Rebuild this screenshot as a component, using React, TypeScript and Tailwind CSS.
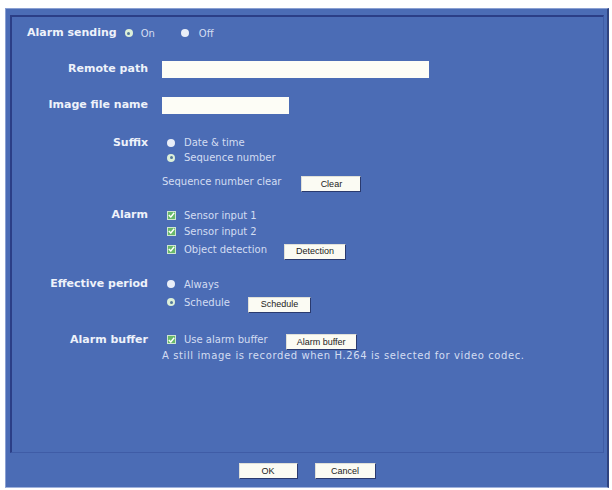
const label = 'w-[136px] shrink-0 text-right font-bold text-[11px] text-[#eef2fa]';
const val = 'text-[10px] text-[#d3ddf2]';

function Radio({ on }: { on?: boolean }) {
  return on ? (
    <span className="w-[8px] h-[8px] rounded-full bg-[#dcefd8] flex items-center justify-center shrink-0">
      <span className="w-[3px] h-[3px] rounded-full bg-[#54789a]" />
    </span>
  ) : (
    <span className="block w-[8px] h-[8px] rounded-full bg-[#e9eef8] shrink-0" />
  );
}

function Check() {
  return (
    <span className="w-[9px] h-[9px] bg-[#68b86a] border border-[#cfe6cf] flex items-center justify-center shrink-0">
      <svg width="7" height="6" viewBox="0 0 7 6">
        <path d="M0.8 3 L2.8 5 L6.2 0.8" stroke="#fff" strokeWidth="1.4" fill="none" />
      </svg>
    </span>
  );
}

function Btn({ children, w }: { children: string; w: string }) {
  return (
    <button
      className={`${w} h-[16px] bg-[#fbfbf3] border-t border-l border-[#e0e0d8] border-r border-b border-r-[#2a3a6e] border-b-[#2a3a6e] text-[9px] leading-none text-[#222] font-['Liberation_Sans',Arial,sans-serif] shrink-0`}
    >
      {children}
    </button>
  );
}

export default function App() {
  return (
    <div className="w-[612px] h-[490px] bg-white pt-[8px] pl-[5px] font-['DejaVu_Sans',Verdana,sans-serif]">
      <div className="w-[604px] h-[480px] bg-[#4b6cb5] border-t border-l border-[#8aa0d2] border-r-2 border-b border-r-[#2f437f] border-b-[#9fb2dc] pt-[6px] pl-[4px] pr-[3px] flex flex-col">
        <div className="h-[438px] border-t-2 border-l-2 border-[#2b3e86] border-r border-b border-r-[#3f5ca6] border-b-[#3f5ca6] flex flex-col pt-[8px]">
          {/* Alarm sending */}
          <div className="h-[16px] flex items-center pl-[15px]">
            <span className="font-bold text-[11px] text-[#eef2fa]">Alarm sending</span>
            <span className="ml-[8px]"><Radio on /></span>
            <span className={`${val} ml-[8px]`}>On</span>
            <span className="ml-[26px]"><Radio /></span>
            <span className={`${val} ml-[10px]`}>Off</span>
          </div>

          {/* Remote path */}
          <div className="h-[17px] mt-[20px] flex items-center">
            <span className={label}>Remote path</span>
            <div className="ml-[14px] w-[267px] h-[17px] bg-[#fdfdf6]" />
          </div>

          {/* Image file name */}
          <div className="h-[17px] mt-[19px] flex items-center">
            <span className={label}>Image file name</span>
            <div className="ml-[14px] w-[127px] h-[17px] bg-[#fdfdf6]" />
          </div>

          {/* Suffix */}
          <div className="mt-[21px] flex">
            <span className={`${label} leading-[15px]`}>Suffix</span>
            <div className="ml-[14px] flex flex-col">
              <div className="h-[15px] flex items-center pl-[5px]">
                <Radio />
                <span className={`${val} ml-[9px]`}>Date &amp; time</span>
              </div>
              <div className="h-[15px] flex items-center pl-[5px]">
                <Radio on />
                <span className={`${val} ml-[9px]`}>Sequence number</span>
              </div>
              <div className="h-[17px] mt-[8px] flex items-center">
                <span className={val}>Sequence number clear</span>
                <span className="ml-[20px]"><Btn w="w-[60px]">Clear</Btn></span>
              </div>
            </div>
          </div>

          {/* Alarm */}
          <div className="mt-[17px] flex">
            <span className={`${label} leading-[16px]`}>Alarm</span>
            <div className="ml-[14px] flex flex-col pl-[5px]">
              <div className="h-[16px] flex items-center">
                <Check />
                <span className={`${val} ml-[8px]`}>Sensor input 1</span>
              </div>
              <div className="h-[16px] flex items-center">
                <Check />
                <span className={`${val} ml-[8px]`}>Sensor input 2</span>
              </div>
              <div className="h-[18px] mt-[1px] flex items-center">
                <Check />
                <span className={`${val} ml-[8px]`}>Object detection</span>
                <span className="ml-[17px]"><Btn w="w-[62px]">Detection</Btn></span>
              </div>
            </div>
          </div>

          {/* Effective period */}
          <div className="mt-[18px] flex">
            <span className={`${label} leading-[16px]`}>Effective period</span>
            <div className="ml-[14px] flex flex-col pl-[5px]">
              <div className="h-[16px] flex items-center">
                <Radio />
                <span className={`${val} ml-[9px]`}>Always</span>
              </div>
              <div className="h-[18px] mt-[1px] flex items-center">
                <Radio on />
                <span className={`${val} ml-[9px]`}>Schedule</span>
                <span className="ml-[18px]"><Btn w="w-[63px]">Schedule</Btn></span>
              </div>
            </div>
          </div>

          {/* Alarm buffer */}
          <div className="mt-[20px] flex">
            <span className={`${label} leading-[17px]`}>Alarm buffer</span>
            <div className="ml-[14px] flex flex-col">
              <div className="h-[17px] flex items-center pl-[5px]">
                <Check />
                <span className={`${val} ml-[8px]`}>Use alarm buffer</span>
                <span className="ml-[18px]"><Btn w="w-[71px]">Alarm buffer</Btn></span>
              </div>
              <div className={`${val} leading-[15px] tracking-[0.6px]`}>
                A still image is recorded when H.264 is selected for video codec.
              </div>
            </div>
          </div>
        </div>

        {/* Footer */}
        <div className="flex-1 flex items-center justify-center gap-[17px] pt-[2px]">
          <Btn w="w-[59px]">OK</Btn>
          <Btn w="w-[61px]">Cancel</Btn>
        </div>
      </div>
    </div>
  );
}
